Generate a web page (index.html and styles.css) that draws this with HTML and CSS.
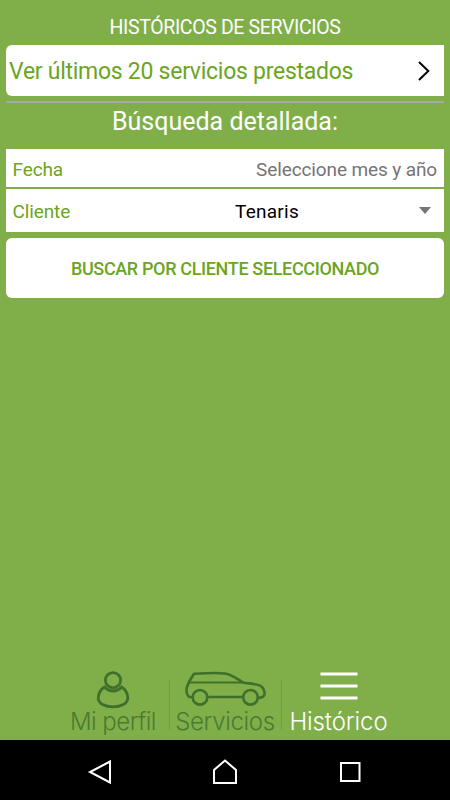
FILE: index.html
```
<!DOCTYPE html>
<html lang="es">
<head>
    <meta charset="utf-8">
    <title>Históricos de servicios</title>
    <link rel="stylesheet" href="styles.css">
</head>
<body>
    <main>
        <h1>HISTÓRICOS DE SERVICIOS</h1>
        <a class="last-services">
            <span>Ver últimos 20 servicios prestados</span>
            <svg width="14" height="22" viewBox="0 0 14 22"><path d="M2 2 L11.3 11 L2 20" fill="none" stroke="#000" stroke-width="2"/></svg>
        </a>
        <h2>Búsqueda detallada:</h2>
        <div class="row date">
            <span class="label">Fecha</span>
            <span class="hint">Seleccione mes y año</span>
        </div>
        <div class="row client">
            <span class="label">Cliente</span>
            <span class="value">Tenaris</span>
            <span class="arrow"></span>
        </div>
        <button class="search">BUSCAR POR CLIENTE SELECCIONADO</button>
    </main>
    <nav class="tabs">
        <a class="tab profile">
            <svg width="36" height="42" viewBox="0 0 36 42" fill="none" stroke="#3f702b" stroke-width="2.800">
                <circle cx="18" cy="12.2" r="7.6"/>
                <path d="M9.500 19 C5.500 21 3.200 26 3.200 30 C3.200 35.500 10 38.800 18 38.800 C26 38.800 32.800 35.500 32.800 30 C32.800 26 30.500 21 26.500 19 C22 24.300 14 24.300 9.500 19 Z"/>
            </svg>
            <span>Mi perfil</span>
        </a>
        <a class="tab services">
            <svg width="84" height="42" viewBox="0 0 84 42" fill="none" stroke="#3f702b" stroke-width="2.600" stroke-linejoin="round">
                <path d="M9.500 29 H6.500 C4.200 28 3.200 24 3.700 20.500 C4.200 17.500 5.500 15.500 6.500 13 L11 5.800 C18 5.400 36 4.600 42 5.500 C50 7 54 11 60 14.500 C67 15.800 76 15.500 79 19 C81 21 82 25 81.300 27 C80.500 29 79 29.800 75.500 29.800"/>
                <path d="M24.500 29 H60"/>
                <path d="M6.500 14.500 H61" stroke-width="2.200"/>
                <circle cx="17" cy="29.300" r="7.300"/>
                <circle cx="67.500" cy="29.300" r="7.300"/>
            </svg>
            <span>Servicios</span>
        </a>
        <a class="tab history">
            <svg width="38" height="42" viewBox="0 0 38 42" stroke="#fff" stroke-width="3"><path d="M.5 6 H37.500 M.5 18 H37.500 M.5 30 H37.500"/></svg>
            <span>Histórico</span>
        </a>
    </nav>
    <footer class="system-bar">
        <svg width="28" height="28" viewBox="0 0 28 28"><path d="M24 3.500 V24.500 L4 14 Z"/></svg>
        <svg width="28" height="28" viewBox="0 0 28 28"><path d="M14 2.500 L25 12 V25 H3 V12 Z"/></svg>
        <svg width="28" height="28" viewBox="0 0 28 28"><path d="M5 5 H23.500 V23 H5 Z"/></svg>
    </footer>
</body>
</html>
```

FILE: styles.css
```
body {
    margin: 0;
    height: 800px;
    display: flex;
    flex-direction: column;
    overflow: hidden;
    background-color: #80af49;
    font-family: Roboto, sans-serif;
}

main {
    flex: 1;
    display: flex;
    flex-direction: column;
    padding: 9px 6px 0;
}

h1 {
    margin: 0;
    height: 36px;
    line-height: 37px;
    font-size: 19.5px;
    letter-spacing: -0.36px;
    font-weight: 400;
    text-align: center;
    color: #fff;
}

.last-services {
    display: flex;
    align-items: center;
    justify-content: space-between;
    height: 51px;
    box-sizing: border-box;
    padding: 0 13px 0 3px;
    border-radius: 6px 0 0 6px;
    background-color: #fff;
    color: #6ba51e;
    font-size: 23px;
    letter-spacing: -0.27px;
}

.last-services span {
    padding-top: 2px;
}

h2 {
    margin: 5px 0 0;
    height: 46px;
    line-height: 37px;
    border-top: 2px solid #a7a7a7;
    font-size: 25px;
    font-weight: 400;
    text-align: center;
    color: #fff;
}

.row {
    display: flex;
    align-items: center;
    box-sizing: border-box;
    padding: 0 7px 0 6.500px;
    background-color: #fff;
    font-size: 19px;
    letter-spacing: -0.12px;
}

.label {
    width: 222.5px;
    color: #6ba51e;
}

.date {
    height: 38px;
    padding-top: 2px;
    justify-content: space-between;
}

.hint {
    color: #757575;
}

.client {
    height: 43px;
    margin-top: 2px;
    padding-right: 13px;
}

.client .label,
.value {
    padding-top: 1px;
}

.value {
    flex: 1;
    color: #000;
    letter-spacing: 0.25px;
}

.arrow {
    border: 6px solid transparent;
    border-top: 7px solid #757575;
    border-bottom: 0;
}

.search {
    height: 60px;
    margin-top: 6px;
    padding: 0;
    border: none;
    border-radius: 6px;
    background-color: #fff;
    color: #6ba51e;
    font: 500 18px Roboto, sans-serif;
    letter-spacing: -0.35px;
}

.tabs {
    display: flex;
    justify-content: center;
    height: 72px;
}

.tab {
    display: flex;
    flex-direction: column;
    align-items: center;
    width: 113px;
    box-sizing: border-box;
    color: #4a7a32;
    font: 300 24px/23px Inter, "Liberation Sans", sans-serif;
    letter-spacing: -0.35px;
    white-space: nowrap;
}

.tab svg {
    flex-shrink: 0;
}

.profile {
    padding-left: 2px;
    letter-spacing: -0.55px;
}

.services {
    background: linear-gradient(#71a03f, #71a03f) 0 12px / 1px 50px no-repeat,
                linear-gradient(#71a03f, #71a03f) 100% 12px / 1px 50px no-repeat;
}

.history {
    padding-left: 1px;
    letter-spacing: -0.1px;
    color: #fff;
}

.system-bar {
    display: flex;
    justify-content: space-between;
    align-items: center;
    height: 60px;
    box-sizing: border-box;
    padding: 4px 86px 0;
    background-color: #000;
}

.system-bar path {
    fill: none;
    stroke: #fff;
    stroke-width: 2;
}
```
